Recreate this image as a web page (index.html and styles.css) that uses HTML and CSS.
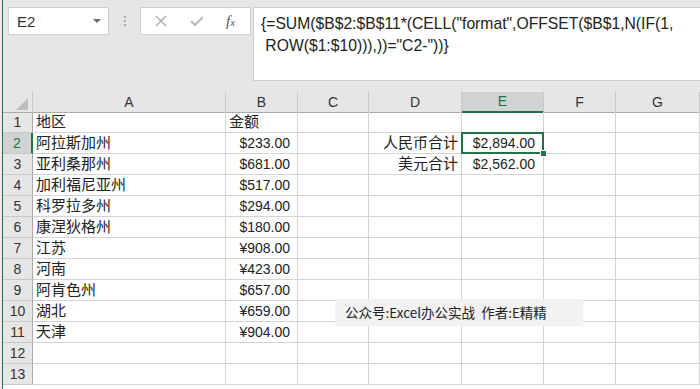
FILE: index.html
```html
<!DOCTYPE html>
<html>
<head>
  <meta charset="UTF-8">
  <link rel="stylesheet" href="styles.css">
</head>
<body>
  <div class="app">
    <div class="toolbar">
      <div class="name-box">
        <span>E2</span>
        <span class="caret"></span>
      </div>
      <div class="grip"><i></i><i></i><i></i></div>
      <div class="fx-box">
        <svg class="icon" width="14" height="14" viewBox="0 0 14 14">
          <path d="M2 2 L12 12 M12 2 L2 12" stroke="#a9a9a9" stroke-width="1.3" fill="none"/>
        </svg>
        <svg class="icon" width="16" height="14" viewBox="0 0 16 14">
          <path d="M2 7 L6 11 L14 3" stroke="#bcbcbc" stroke-width="2.2" fill="none"/>
        </svg>
        <span class="fx">f<small>x</small></span>
      </div>
      <div class="formula">
        <div>{=SUM($B$2:$B$11*(CELL("format",OFFSET($B$1,N(IF(1,</div>
        <div>&nbsp;ROW($1:$10))),))="C2-"))}</div>
      </div>
    </div>

    <div class="sheet">
      <div class="row head">
        <div class="cell corner"><span class="tri"></span></div>
        <div class="cell">A</div>
        <div class="cell">B</div>
        <div class="cell">C</div>
        <div class="cell">D</div>
        <div class="cell on">E</div>
        <div class="cell">F</div>
        <div class="cell">G</div>
      </div>
      <div class="row">
        <div class="cell num">1</div>
        <div class="cell">地区</div>
        <div class="cell">金额</div>
        <div class="cell"></div><div class="cell"></div><div class="cell"></div><div class="cell"></div><div class="cell"></div>
      </div>
      <div class="row">
        <div class="cell num on">2</div>
        <div class="cell">阿拉斯加州</div>
        <div class="cell money">$233.00</div>
        <div class="cell"></div>
        <div class="cell right">人民币合计</div>
        <div class="cell money total selected">$2,894.00<span class="handle"></span></div>
        <div class="cell"></div><div class="cell"></div>
      </div>
      <div class="row">
        <div class="cell num">3</div>
        <div class="cell">亚利桑那州</div>
        <div class="cell money">$681.00</div>
        <div class="cell"></div>
        <div class="cell right">美元合计</div>
        <div class="cell money total">$2,562.00</div>
        <div class="cell"></div><div class="cell"></div>
      </div>
      <div class="row">
        <div class="cell num">4</div>
        <div class="cell">加利福尼亚州</div>
        <div class="cell money">$517.00</div>
        <div class="cell"></div><div class="cell"></div><div class="cell"></div><div class="cell"></div><div class="cell"></div>
      </div>
      <div class="row">
        <div class="cell num">5</div>
        <div class="cell">科罗拉多州</div>
        <div class="cell money">$294.00</div>
        <div class="cell"></div><div class="cell"></div><div class="cell"></div><div class="cell"></div><div class="cell"></div>
      </div>
      <div class="row">
        <div class="cell num">6</div>
        <div class="cell">康涅狄格州</div>
        <div class="cell money">$180.00</div>
        <div class="cell"></div><div class="cell"></div><div class="cell"></div><div class="cell"></div><div class="cell"></div>
      </div>
      <div class="row">
        <div class="cell num">7</div>
        <div class="cell">江苏</div>
        <div class="cell money">¥908.00</div>
        <div class="cell"></div><div class="cell"></div><div class="cell"></div><div class="cell"></div><div class="cell"></div>
      </div>
      <div class="row">
        <div class="cell num">8</div>
        <div class="cell">河南</div>
        <div class="cell money">¥423.00</div>
        <div class="cell"></div><div class="cell"></div><div class="cell"></div><div class="cell"></div><div class="cell"></div>
      </div>
      <div class="row">
        <div class="cell num">9</div>
        <div class="cell">阿肯色州</div>
        <div class="cell money">$657.00</div>
        <div class="cell"></div><div class="cell"></div><div class="cell"></div><div class="cell"></div><div class="cell"></div>
      </div>
      <div class="row">
        <div class="cell num">10</div>
        <div class="cell">湖北</div>
        <div class="cell money">¥659.00</div>
        <div class="cell"></div><div class="cell"></div><div class="cell"></div><div class="cell"></div><div class="cell"></div>
      </div>
      <div class="row">
        <div class="cell num">11</div>
        <div class="cell">天津</div>
        <div class="cell money">¥904.00</div>
        <div class="cell"></div><div class="cell"></div><div class="cell"></div><div class="cell"></div><div class="cell"></div>
      </div>
      <div class="row">
        <div class="cell num">12</div>
        <div class="cell"></div><div class="cell"></div><div class="cell"></div><div class="cell"></div><div class="cell"></div><div class="cell"></div><div class="cell"></div>
      </div>
      <div class="row">
        <div class="cell num">13</div>
        <div class="cell"></div><div class="cell"></div><div class="cell"></div><div class="cell"></div><div class="cell"></div><div class="cell"></div><div class="cell"></div>
      </div>

      <div class="watermark">公众号:Excel办公实战&nbsp; 作者:E精精</div>
    </div>
  </div>
</body>
</html>
```

FILE: styles.css
```css
body {
  margin: 0;
  background-color: #ececec;
  font-family: "Liberation Sans", "Noto Sans CJK SC", sans-serif;
  color: #222;
  overflow: hidden;
}

.app {
  width: 697px;
  height: 389px;
  margin-left: 2px;
  border-left: 1px solid #217346;
  background-color: #fff;
}

/* Toolbar: name box + formula bar */
.toolbar {
  display: flex;
  align-items: flex-start;
  height: 92px;
  padding-top: 7px;
  box-sizing: border-box;
  background-color: #e6e6e6;
}

.name-box {
  display: flex;
  align-items: center;
  justify-content: space-between;
  box-sizing: border-box;
  width: 101px;
  height: 28px;
  margin-left: 5px;
  padding: 0 7px 0 8px;
  background-color: #fff;
  border: 1px solid #cfcfcf;
  font-size: 15px;
  color: #333;
}

.caret {
  width: 0;
  height: 0;
  border-left: 4px solid transparent;
  border-right: 4px solid transparent;
  border-top: 4px solid #6b6b6b;
}

.grip {
  display: flex;
  flex-direction: column;
  gap: 2px;
  width: 2px;
  margin: 9px 14px 0 15px;
}

.grip i {
  width: 2px;
  height: 2px;
  background-color: #a9a9a9;
}

.fx-box {
  display: flex;
  align-items: center;
  box-sizing: border-box;
  width: 111px;
  height: 28px;
  padding-left: 13px;
  gap: 21px;
  background-color: #fff;
  border: 1px solid #cfcfcf;
}

.fx {
  font-family: "Liberation Serif", serif;
  font-style: italic;
  font-size: 15px;
  color: #555;
}

.fx small {
  font-size: 11px;
}

.formula {
  flex: 1;
  box-sizing: border-box;
  height: 74px;
  margin-left: 2px;
  padding: 5px 0 0 7px;
  background-color: #fff;
  border: 1px solid #cfcfcf;
  border-right: none;
  font-size: 15.7px;
  line-height: 22px;
  color: #222;
}

/* Grid */
.sheet {
  position: relative;
}

.row {
  display: grid;
  grid-template-columns: 30px 193px 72px 71px 93px 82px 72px 1fr;
  height: 21px;
}

.cell {
  box-sizing: border-box;
  border-right: 1px solid #d4d4d4;
  border-bottom: 1px solid #d4d4d4;
  padding: 0 3px;
  font-size: 15px;
  line-height: 20px;
  white-space: nowrap;
  overflow: visible;
}

.row.head {
  height: 20px;
  background-color: #e6e6e6;
}

.head .cell {
  text-align: center;
  font-size: 14px;
  line-height: 20px;
  color: #333;
  border-right-color: #c8c8c8;
  border-bottom: 1px solid #ababab;
}

.head .cell.on {
  background-color: #d2d2d2;
  color: #217346;
  border-bottom: 2px solid #217346;
  line-height: 19px;
}

.corner {
  position: relative;
}

.tri {
  position: absolute;
  right: 4px;
  bottom: 2px;
  width: 0;
  height: 0;
  border-left: 12px solid transparent;
  border-bottom: 12px solid #bdbdbd;
}

.cell.num {
  background-color: #e6e6e6;
  text-align: center;
  font-size: 14px;
  color: #333;
  border-right-color: #ababab;
  border-bottom-color: #c8c8c8;
}

.cell.num.on {
  background-color: #d2d2d2;
  color: #217346;
  border-right: 2px solid #217346;
}

.money {
  text-align: right;
  font-size: 14px;
  padding-right: 7px;
}

.money.total {
  padding-right: 8px;
}

.right {
  text-align: right;
}

.selected {
  position: relative;
}

.selected::after {
  content: "";
  position: absolute;
  top: -1px;
  left: -1px;
  right: -1px;
  bottom: -1px;
  border: 2px solid #217346;
}

.handle {
  position: absolute;
  right: -4px;
  bottom: -4px;
  width: 5px;
  height: 5px;
  background-color: #217346;
  border: 1px solid #fff;
  z-index: 1;
}

.watermark {
  position: absolute;
  left: 332px;
  top: 207px;
  width: 248px;
  height: 27px;
  box-sizing: border-box;
  padding-left: 10px;
  background-color: #f2f2f2;
  font-family: "Noto Sans CJK SC", sans-serif;
  font-size: 13.5px;
  line-height: 27px;
  color: #222;
}
```
